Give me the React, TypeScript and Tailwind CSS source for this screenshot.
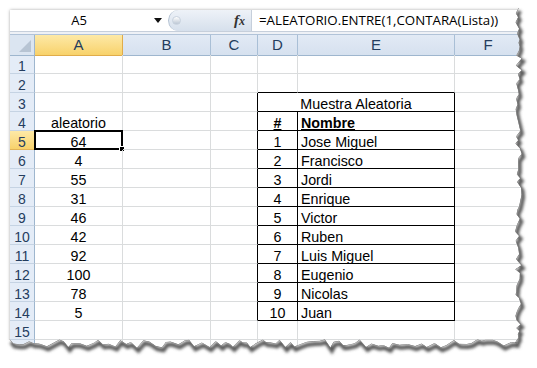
import clsx from 'clsx'

const COLS = ['A', 'B', 'C', 'D', 'E', 'F']
const nums = [64, 4, 55, 31, 46, 42, 92, 100, 78, 5]
const names = ['Jose Miguel', 'Francisco', 'Jordi', 'Enrique', 'Victor', 'Ruben', 'Luis Miguel', 'Eugenio', 'Nicolas', 'Juan']
const rows = Array.from({ length: 16 }, (_, i) => i + 1)

// deterministic jagged edge for the torn-paper look
function tornPath() {
  let seed = 7
  const rnd = () => {
    seed = (seed * 9301 + 49297) % 233280
    return seed / 233280
  }
  const right: Array<[number, number]> = []
  for (let y = 8; y < 344; y += 3 + rnd() * 4) {
    right.push([515 + rnd() * 7, y])
  }
  const bottom: Array<[number, number]> = []
  for (let x = 518; x > 6; x -= 3 + rnd() * 5) {
    bottom.push([x, 339 + rnd() * 9])
  }
  const edge = [...right, ...bottom]
  const line = edge.map(([x, y], i) => `${i ? 'L' : 'M'}${x.toFixed(1)} ${y.toFixed(1)}`).join(' ')
  const mask = `M537 0 L${right[0][0].toFixed(1)} 0 ` + edge.map(([x, y]) => `L${x.toFixed(1)} ${y.toFixed(1)}`).join(' ') + ' L0 346 L0 368 L537 368 Z'
  return { line, mask }
}

function cellCls(r: number, c: string) {
  const rightBlack = (c === 'C' && r >= 3 && r <= 14) || (c === 'D' && r >= 4 && r <= 14) || (c === 'E' && r >= 3 && r <= 14)
  const bottomBlack = (c === 'D' || c === 'E') && r >= 2 && r <= 14
  return clsx(
    'relative border-r border-b whitespace-nowrap leading-[18px] pt-[2px]',
    rightBlack ? 'border-r-black' : 'border-r-[#dadcdd]',
    bottomBlack ? 'border-b-black' : 'border-b-[#dadcdd]'
  )
}

function Row({ r }: { r: number }) {
  const active = r === 5
  return (
    <>
      <div
        className={clsx(
          'border-r border-b text-center leading-[18px] pt-[2px] text-[14px] text-[#243d5e]',
          active
            ? 'bg-gradient-to-b from-[#fde9a6] to-[#f8d26a] border-r-[#d9a43c] border-b-[#e2b458]'
            : 'bg-[#e4ecf7] border-r-[#9eb6ce] border-b-[#c5d3e3]'
        )}
      >
        {r}
      </div>
      {COLS.map((c) => {
        if (r === 3 && c === 'E') return null
        if (r === 3 && c === 'D') {
          return (
            <div key={c} className={clsx(cellCls(3, 'E'), 'col-span-2 text-center')}>
              Muestra Aleatoria
            </div>
          )
        }
        let content: React.ReactNode = null
        let align = 'text-center'
        if (c === 'A' && r === 4) content = 'aleatorio'
        if (c === 'A' && r >= 5 && r <= 14) content = nums[r - 5]
        if (c === 'D' && r === 4) content = <span className="font-bold underline">#</span>
        if (c === 'E' && r === 4) content = <span className="font-bold underline">Nombre</span>
        if (c === 'D' && r >= 5 && r <= 14) content = r - 4
        if (c === 'E' && r >= 4 && r <= 14) {
          align = 'text-left pl-[3px]'
          if (r >= 5) content = names[r - 5]
        }
        return (
          <div key={c} className={clsx(cellCls(r, c), align)}>
            {content}
            {c === 'A' && r === 5 && (
              <div className="absolute -left-px -top-px -right-px -bottom-px border-2 border-black">
                <div className="absolute -right-[4px] -bottom-[4px] w-[6px] h-[6px] bg-black border border-white" />
              </div>
            )}
          </div>
        )
      })}
    </>
  )
}

export default function App() {
  const { line, mask } = tornPath()
  return (
    <div className="relative w-[537px] h-[368px] bg-white overflow-hidden" style={{ fontFamily: '"Liberation Sans", Arial, sans-serif' }}>
      <div className="absolute left-[10px] top-[10px] w-[512px] h-[345px] overflow-hidden bg-white shadow-[0_0_3px_rgba(0,0,0,0.35)]">
        {/* formula bar */}
        <div className="flex h-[22px] items-stretch border-b border-[#c6cfdb] bg-white">
          <div className="w-[138px] text-center text-[13px] leading-[21px] text-black" style={{ fontFamily: '"Open Sans", "Noto Sans", sans-serif' }}>
            A5
          </div>
          <div className="w-[20px] flex items-center justify-center">
            <svg width="8" height="5" viewBox="0 0 8 5">
              <polygon points="0,0 8,0 4,5" fill="#111" />
            </svg>
          </div>
          <div className="w-[83px] flex items-center rounded-l-full border-l border-[#b3c1d2] bg-gradient-to-b from-[#eef2f8] to-[#d6e0ec]">
            <div className="ml-[3px] w-[9px] h-[9px] rounded-full bg-gradient-to-b from-[#ffffff] to-[#bcc7d4] border border-[#c8d2de]" />
            <div className="flex-1" />
            <span className="mr-[6px] italic font-bold text-[15px] text-[#333]" style={{ fontFamily: '"Liberation Serif", serif' }}>
              f<span className="text-[12px]">x</span>
            </span>
          </div>
          <div className="flex-1 border-l border-[#c6cfdb] pl-[7px] text-[13.3px] leading-[21px] text-black whitespace-nowrap" style={{ fontFamily: '"Open Sans", "Noto Sans", sans-serif' }}>
            =ALEATORIO.ENTRE(1,CONTARA(Lista))
          </div>
        </div>
        <div className="h-[3px] bg-[#eef1f6] border-b border-[#b1c3d8]" />
        {/* column headers */}
        <div className="grid grid-cols-[25px_88px_88px_47px_40px_157px_67px] h-[20px] text-[15px] text-[#243d5e]">
          <div className="relative bg-[#dbe5f1] border-r border-b border-[#9eb6ce]">
            <svg className="absolute right-[3px] bottom-[3px]" width="12" height="12" viewBox="0 0 12 12">
              <polygon points="12,0 12,12 0,12" fill="#b7c4d3" />
            </svg>
          </div>
          {COLS.map((c) => (
            <div
              key={c}
              className={clsx(
                'text-center leading-[20px] border-r border-b',
                c === 'A'
                  ? 'bg-gradient-to-b from-[#fde9a6] to-[#f8d26a] border-[#e0ac4a]'
                  : 'bg-gradient-to-b from-[#e2eaf5] to-[#d6e1ef] border-r-[#a9bfd6] border-b-[#9eb6ce]'
              )}
            >
              {c}
            </div>
          ))}
        </div>
        {/* cells */}
        <div className="grid grid-cols-[25px_88px_88px_47px_40px_157px_67px] auto-rows-[19px] text-[14.3px] text-black">
          {rows.map((r) => (
            <Row key={r} r={r} />
          ))}
        </div>
      </div>
      {/* torn right and bottom edges */}
      <svg className="absolute left-0 top-0 pointer-events-none" width="537" height="368" viewBox="0 0 537 368">
        <defs>
          <filter id="blur" x="-10%" y="-10%" width="120%" height="120%">
            <feGaussianBlur stdDeviation="1.8" />
          </filter>
          <clipPath id="outside">
            <path d={mask} />
          </clipPath>
        </defs>
        <path d={mask} fill="#ffffff" />
        <g clipPath="url(#outside)">
          <path d={line} transform="translate(1.5 3)" fill="none" stroke="#555" strokeWidth="4" filter="url(#blur)" />
          <path d={line} fill="none" stroke="#7a7a7a" strokeWidth="1" />
        </g>
      </svg>
    </div>
  )
}
